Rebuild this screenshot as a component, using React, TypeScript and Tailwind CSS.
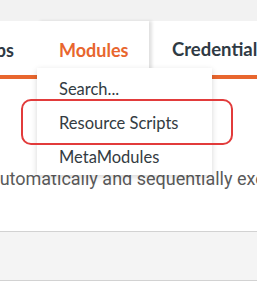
export default function App() {
    return (
        <div className="relative w-[257px] h-[282px] overflow-hidden bg-white" style={{ fontFamily: 'Lato, "Noto Sans", sans-serif' }}>
            {/* Top strip */}
            <div className="h-[21px] bg-[#f2f2f2]" />

            {/* Nav tabs */}
            <div className="flex h-[54px] bg-white pt-[4px]">
                <div className="shrink-0 flex items-center justify-end -ml-[40px] w-[77px] pr-[23px] text-[18px] font-bold text-[#2f3a44]">Apps</div>
                <div className="shrink-0 flex items-center w-[112px] -mt-[4px] pt-[4px] pl-[22px] bg-white shadow-[3px_0_3px_rgba(0,0,0,0.12)] text-[18px] font-bold text-[#e8662e]">
                    Modules
                </div>
                <div className="shrink-0 flex items-center pl-[23px] text-[18.5px] font-bold text-[#2f3a44] whitespace-nowrap">
                    Credentials
                </div>
            </div>
            <div className="h-[4px] bg-[#e8662e]" />

            {/* Description */}
            <div className="pt-[86px] -ml-[12px] whitespace-nowrap text-[18px] text-[#5a5a5a]" style={{ fontFamily: 'Roboto, sans-serif' }}>
                Automatically and sequentially execute
            </div>

            {/* Bottom panel */}
            <div className="absolute left-0 right-0 top-[231px] h-[50px] bg-[#f4f4f4] border-y border-[#d2d2d2]" />

            {/* Dropdown */}
            <div className="absolute left-[37px] top-[68px] w-[175px] h-[107px] bg-white shadow-[0_2px_6px_rgba(0,0,0,0.16)] flex flex-col pl-[22px] pt-[4px] text-[16.5px] text-[#333b42]">
                <div className="h-[34px] flex items-center">Search...</div>
                <div className="h-[34px] flex items-center">Resource Scripts</div>
                <div className="h-[34px] flex items-center">MetaModules</div>
            </div>

            {/* Highlight ring */}
            <div className="absolute left-[21px] top-[99px] w-[212px] h-[46px] rounded-[10px] border-2 border-[#e23b3b]" />
        </div>
    );
}
